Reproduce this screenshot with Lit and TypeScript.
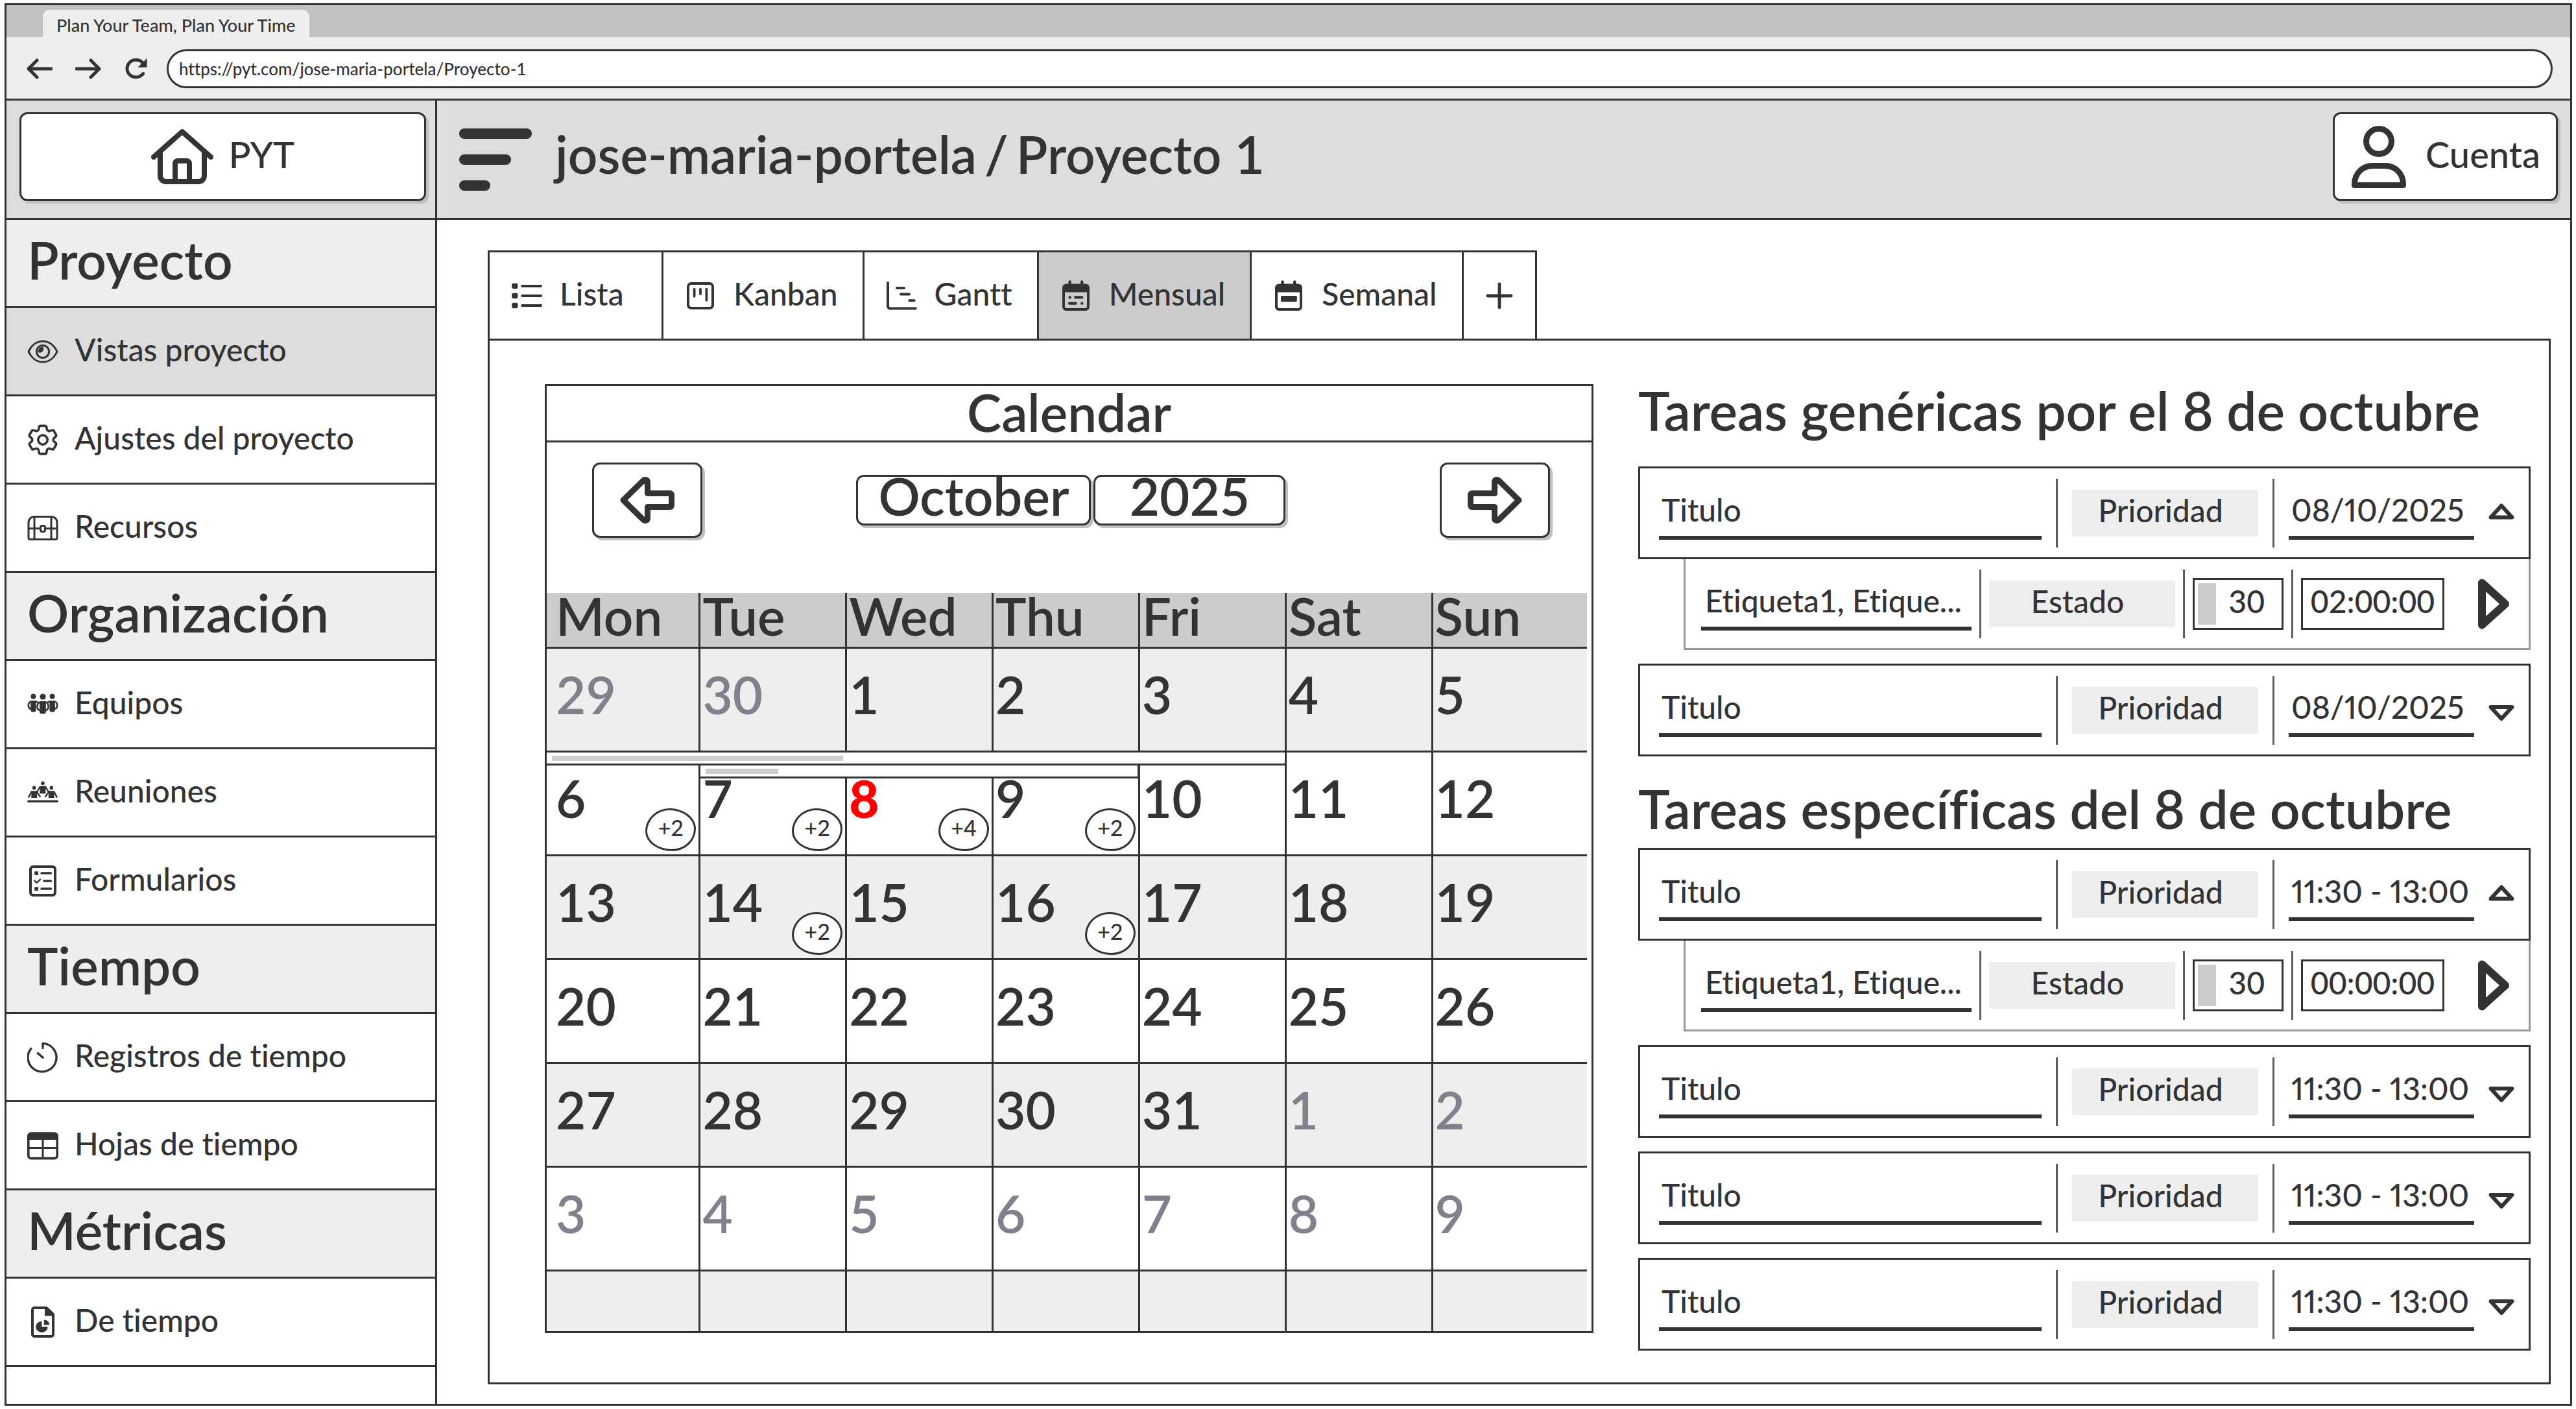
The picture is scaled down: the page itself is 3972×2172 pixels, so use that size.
import { LitElement, html, css, svg, nothing } from "lit";
import type { TemplateResult } from "lit";
import { customElement, property } from "lit/decorators.js";
import { classMap } from "lit/directives/class-map.js";
import { styleMap } from "lit/directives/style-map.js";

type Glyph = { box: string; body: TemplateResult };

const icons: Record<string, Glyph> = {
  back: { box: "0 0 40 32", body: svg`<path d="M38 16H3M16 3 3 16l13 13" stroke-width="5"/>` },
  forward: { box: "0 0 40 32", body: svg`<path d="M2 16h35M24 3l13 13-13 13" stroke-width="5"/>` },
  reload: {
    box: "0 0 38 36",
    body: svg`<path d="M30 26.5A15.500 15 0 1 1 29 7.500" stroke-width="5.500"/><path d="M36 1v14H22Z" fill="currentColor" stroke-width="1"/>`,
  },
  home: {
    box: "0 0 96 86",
    body: svg`<path d="M4 43 48 4l44 39M14 36v36a9 9 0 0 0 9 9h50a9 9 0 0 0 9-9V36M37 80V53a4 4 0 0 1 4-4h14a4 4 0 0 1 4 4v27" stroke-width="8"/>`,
  },
  person: {
    box: "0 0 84 96",
    body: svg`<circle cx="42" cy="24" r="19.500" stroke-width="9"/><path d="M4.500 91.500V90C4.500 73 17 61.500 33 61.500h18c16 0 28.500 11.500 28.500 28.500v1.500Z" stroke-width="9"/>`,
  },
  menu: {
    box: "0 0 112 96",
    body: svg`<g fill="currentColor" stroke="none"><rect width="112" height="16" rx="8"/><rect y="40" width="80" height="16" rx="8"/><rect y="80" width="48" height="16" rx="8"/></g>`,
  },
  eye: {
    box: "0 0 24 24",
    body: svg`<path d="M1 12c2.200-4.800 6.200-8 11-8s8.800 3.200 11 8c-2.200 4.800-6.200 8-11 8S3.200 16.800 1 12Z"/><circle cx="12" cy="12" r="4.800"/><path d="M8.800 12.200c2 .6 3.800-1 3.200-3.400-2 .1-3.200 1.500-3.200 3.400Z" fill="currentColor" stroke-width="1"/>`,
  },
  gear: {
    box: "2 2 20 20",
    body: svg`<path d="M9.594 3.940c.09-.542.56-.94 1.110-.94h2.593c.55 0 1.020.398 1.110.94l.213 1.281c.063.374.313.686.645.87.074.04.147.083.22.127.325.196.72.257 1.075.124l1.217-.456a1.125 1.125 0 0 1 1.370.49l1.296 2.247a1.125 1.125 0 0 1-.26 1.431l-1.003.827c-.293.241-.438.613-.43.992a7.723 7.723 0 0 1 0 .255c-.008.378.137.75.43.991l1.004.827c.424.35.534.955.26 1.430l-1.298 2.247a1.125 1.125 0 0 1-1.369.491l-1.217-.456c-.355-.133-.75-.072-1.076.124a6.470 6.470 0 0 1-.22.128c-.331.183-.581.495-.644.869l-.213 1.281c-.09.543-.56.94-1.110.94h-2.594c-.55 0-1.019-.398-1.110-.94l-.213-1.281c-.062-.374-.312-.686-.644-.87a6.520 6.520 0 0 1-.22-.127c-.325-.196-.72-.257-1.076-.124l-1.217.456a1.125 1.125 0 0 1-1.369-.49l-1.297-2.247a1.125 1.125 0 0 1 .26-1.431l1.004-.827c.292-.24.437-.613.43-.991a6.932 6.932 0 0 1 0-.255c.007-.38-.138-.751-.43-.992l-1.004-.827a1.125 1.125 0 0 1-.26-1.430l1.297-2.247a1.125 1.125 0 0 1 1.370-.491l1.216.456c.356.133.751.072 1.076-.124.072-.044.146-.086.22-.128.332-.183.582-.495.644-.869l.214-1.280Z"/><circle cx="12" cy="12" r="3"/>`,
  },
  chest: {
    box: "0 0 24 24",
    body: svg`<path d="M1 19.500V7.500a4.300 4.300 0 0 1 4.300-4.300h13.400A4.300 4.300 0 0 1 23 7.500v12a1.200 1.200 0 0 1-1.200 1.200H2.200A1.200 1.200 0 0 1 1 19.500ZM5.500 3.400v17.200M18.500 3.400v17.200M1 12.400h9M14 12.400h9"/><rect x="10.300" y="10.200" width="3.400" height="4.600" rx="1"/>`,
  },
  team: {
    box: "0 0 24 24",
    body: svg`<g fill="currentColor" stroke="none"><circle cx="4.700" cy="5.800" r="2"/><circle cx="19.300" cy="5.800" r="2"/><circle cx="12" cy="6" r="2.300"/><path d="M2.600 9h4.200v7.500a1.200 1.200 0 0 1-1.200 1.200H3.800a1.200 1.200 0 0 1-1.200-1.200ZM17.200 9h4.200v7.500a1.200 1.200 0 0 1-1.200 1.200h-1.800a1.200 1.200 0 0 1-1.200-1.200ZM9.600 9.500h4.800v8.300a1.300 1.300 0 0 1-1.300 1.300h-2.200a1.300 1.300 0 0 1-1.300-1.300Z"/></g><path d="M2.800 9.700C.4 10.500.2 14.400 2.600 15.400M6.500 9.600c.8.100 1.300.4 1.600.8M21.200 9.700c2.400.8 2.600 4.700.2 5.700M17.500 9.600c-.8.100-1.300.4-1.600.8M9.800 10.200c-2.800 1.200-2.800 5.400 0 6.400M14.200 10.200c2.800 1.200 2.800 5.400 0 6.400" stroke-width="1.300"/>`,
  },
  meeting: {
    box: "0 0 24 24",
    body: svg`<g fill="currentColor" stroke="none"><circle cx="12" cy="4.600" r="1.400"/><circle cx="5.300" cy="8.200" r="1.400"/><circle cx="18.700" cy="8.200" r="1.400"/><path d="M9.800 6.900h4.400v5.700H9.800ZM3.200 10.600h4.400V16H3.200ZM16.400 10.600h4.400V16h-4.400Z"/></g><path d="M9.800 7.500 7.800 11M14.200 7.500l2 3.500M3.300 11.300 1.200 15.300M7.500 11.300l2.400 3.700M16.500 11.300 14.100 15M20.700 11.300l2.100 4" stroke-width="1.200"/><path d="M.9 18.600h22.200" stroke-width="1.700"/>`,
  },
  form: {
    box: "0 0 24 24",
    body: svg`<rect x="2.500" y="1" width="19" height="22" rx="2" stroke-width="2"/><path d="M11 6h7.200M13 12h5.200M11 18h7.200" stroke-width="1.800"/><path d="M5.700 11.800l1.600 1.600 2.800-2.600" stroke-width="1.200"/><g fill="currentColor" stroke="none"><rect x="5.600" y="4.600" width="2.900" height="2.900" rx="0.600"/><rect x="5.600" y="16.600" width="2.900" height="2.900" rx="0.600"/></g>`,
  },
  timer: {
    box: "0 0 24 24",
    body: svg`<path d="M12 4.800V1.200A11 10.900 0 1 1 2.900 5.300M8.200 8.800l3.900 3.300" stroke-width="1.700"/>`,
  },
  sheet: {
    box: "0 0 24 24",
    body: svg`<rect x="0.900" y="2.500" width="22.200" height="19.300" rx="2" stroke-width="1.800"/><path d="M1 3h22v4.500H1Z" fill="currentColor" stroke="none"/><path d="M12 7v14.500M1 13.700h22"/>`,
  },
  report: {
    box: "0 0 24 24",
    body: svg`<path d="M14.800 1H5.500A1.500 1.500 0 0 0 4 2.500v19A1.500 1.500 0 0 0 5.500 23h13a1.500 1.500 0 0 0 1.500-1.500V6Z" stroke-width="2"/><path d="M14 1v5.800h6Z" fill="currentColor" stroke-width="1"/><path d="M11.200 11.400v4.200h4.600A4.600 4.300 0 1 1 11.200 11.400Z" fill="currentColor" stroke="none"/><path d="M12.900 10.300v3.800h4.300A4.300 3.800 0 0 0 12.900 10.300Z" fill="currentColor" stroke="none"/>`,
  },
  list: {
    box: "0 0 24 24",
    body: svg`<g fill="currentColor" stroke="none"><rect x="0.600" y="2.400" width="4.600" height="4.200" rx="1.200"/><rect x="0.600" y="9.900" width="4.600" height="4.200" rx="1.200"/><rect x="0.600" y="17.400" width="4.600" height="4.200" rx="1.200"/></g><path d="M8.600 4.500H23M8.600 12H23M8.600 19.500H23" stroke-width="2"/>`,
  },
  kanban: {
    box: "0 0 24 24",
    body: svg`<rect x="2.500" y="2.500" width="19" height="19" rx="2.500" stroke-width="2"/><path d="M7.300 6.800v5.600M12 6.800v3.800M16.700 6.800v8.600" stroke-width="1.900"/>`,
  },
  gantt: {
    box: "0 0 24 24",
    body: svg`<path d="M1.500 2v18a1.800 1.800 0 0 0 1.800 1.800h19.600M8.500 6H14M11.500 10.800H18M18.200 15.600h3.600" stroke-width="2"/>`,
  },
  month: {
    box: "0 0 24 24",
    body: svg`<rect x="2.500" y="3.800" width="19" height="18.700" rx="2" stroke-width="2"/><path d="M2.500 3.500h19v5.700h-19Z" fill="currentColor" stroke="none"/><path d="M7.300 1.200V4M16.600 1.200V4M11.600 13.200h5M7 17.800h4.800M7.300 13.200h.1M16.600 17.800h.1" stroke-width="2.200"/>`,
  },
  week: {
    box: "0 0 24 24",
    body: svg`<rect x="2.500" y="3.800" width="19" height="18.700" rx="2" stroke-width="2"/><path d="M2.500 3.500h19v5.700h-19Z" fill="currentColor" stroke="none"/><path d="M7.300 1.200V4M16.600 1.200V4" stroke-width="2.200"/><rect x="6" y="12" width="12.400" height="4.600" rx="0.800" fill="currentColor" stroke="none"/>`,
  },
  plus: { box: "0 0 24 24", body: svg`<path d="M12 3v18M3 12h18" stroke-width="2.400"/>` },
  arrowLeft: {
    box: "0 0 84 72",
    body: svg`<path d="M5 36 36.500 5.200Q42.500 3 42.500 9v16.500H77q2.500 0 2.500 3v15q0 3-2.500 3H42.500V63q0 6-6 3.800Z" stroke-width="9"/>`,
  },
  arrowRight: {
    box: "0 0 84 72",
    body: svg`<path d="M79 36 47.500 5.200Q41.500 3 41.500 9v16.500H7q-2.500 0-2.500 3v15q0 3 2.500 3h34.500V63q0 6 6 3.800Z" stroke-width="9"/>`,
  },
  up: { box: "0 0 40 40", body: svg`<path d="M3.500 26.500 20 8.500l16.500 18Z" stroke-width="6"/>` },
  down: { box: "0 0 40 40", body: svg`<path d="M3.500 15l16.500 18L36.500 15Z" stroke-width="6"/>` },
  play: { box: "0 0 48 82", body: svg`<path d="M6 8.500v65L42 41Z" stroke-width="12"/>` },
};

const shared = css`
  *,
  *::before,
  *::after {
    box-sizing: border-box;
  }
  h1,
  h2,
  h3,
  p,
  ul {
    margin: 0;
    padding: 0;
    font-weight: inherit;
  }
  ul {
    list-style: none;
  }
  a {
    color: inherit;
    text-decoration: none;
  }
  button,
  input {
    margin: 0;
    padding: 0;
    border: 0;
    border-radius: 0;
    background: none;
    color: inherit;
    font: inherit;
    min-width: 0;
  }
`;

@customElement("ui-icon")
export class UiIcon extends LitElement {
  @property() name = "";

  static styles = css`
    :host {
      display: inline-flex;
      flex: none;
    }
    .glyph {
      width: 100%;
      height: 100%;
      fill: none;
      stroke: currentColor;
      stroke-width: 1.500;
      stroke-linecap: round;
      stroke-linejoin: round;
    }
  `;

  render() {
    const glyph = icons[this.name];
    return glyph
      ? html`<svg class="glyph" viewBox=${glyph.box} aria-hidden="true">${glyph.body}</svg>`
      : nothing;
  }
}

type NavEntry = { label: string; icon?: string; active?: boolean };

const nav: NavEntry[] = [
  { label: "Proyecto" },
  { label: "Vistas proyecto", icon: "eye", active: true },
  { label: "Ajustes del proyecto", icon: "gear" },
  { label: "Recursos", icon: "chest" },
  { label: "Organización" },
  { label: "Equipos", icon: "team" },
  { label: "Reuniones", icon: "meeting" },
  { label: "Formularios", icon: "form" },
  { label: "Tiempo" },
  { label: "Registros de tiempo", icon: "timer" },
  { label: "Hojas de tiempo", icon: "sheet" },
  { label: "Métricas" },
  { label: "De tiempo", icon: "report" },
];

@customElement("side-nav")
export class SideNav extends LitElement {
  static styles = [
    shared,
    css`
      :host {
        display: block;
      }
      .row {
        display: flex;
        align-items: center;
        height: 136px;
        border-bottom: 3px solid var(--ink);
      }
      .section {
        padding: 0 32px 12px;
        background: var(--soft);
        font-size: 80px;
        font-weight: 600;
        line-height: 96px;
      }
      .link {
        gap: 25px;
        padding: 0 32px;
      }
      .active {
        background: var(--mid);
      }
      .icon {
        width: 48px;
        height: 48px;
      }
      .label {
        padding-bottom: 6px;
      }
    `,
  ];

  render() {
    return html`<nav aria-label="Proyecto">
      ${nav.map((entry) =>
        entry.icon
          ? html`<a class=${classMap({ row: true, link: true, active: !!entry.active })} href="#">
              <ui-icon class="icon" name=${entry.icon}></ui-icon>
              <span class="label">${entry.label}</span>
            </a>`
          : html`<h2 class="row section">${entry.label}</h2>`
      )}
    </nav>`;
  }
}

type Bar = { span: number; done: number; lane: number };
type Day = { n: string; muted?: boolean; today?: boolean; more?: string; bar?: Bar };

const day = (n: number, extra: Partial<Day> = {}): Day => ({ n: String(n), ...extra });
const muted = { muted: true };

const weeks: Day[][] = [
  [day(29, muted), day(30, muted), day(1), day(2), day(3), day(4), day(5)],
  [
    day(6, { more: "+2", bar: { span: 488, done: 40, lane: 0 } }),
    day(7, { more: "+2", bar: { span: 305, done: 17, lane: 1 } }),
    day(8, { more: "+4", today: true }),
    day(9, { more: "+2" }),
    day(10),
    day(11),
    day(12),
  ],
  [day(13), day(14, { more: "+2" }), day(15), day(16, { more: "+2" }), day(17), day(18), day(19)],
  [20, 21, 22, 23, 24, 25, 26].map((n) => day(n)),
  [day(27), day(28), day(29), day(30), day(31), day(1, muted), day(2, muted)],
  [3, 4, 5, 6, 7, 8, 9].map((n) => day(n, muted)),
  Array.from({ length: 7 }, () => ({ n: "" })),
];

@customElement("month-calendar")
export class MonthCalendar extends LitElement {
  static styles = [
    shared,
    css`
      :host {
        display: block;
        border: 3px solid var(--ink);
        font-size: 80px;
        font-weight: 600;
        line-height: 96px;
      }
      .title {
        height: 87px;
        border-bottom: 3px solid var(--ink);
        font-size: 80px;
        line-height: 80px;
        text-align: center;
      }
      .picker {
        display: flex;
        justify-content: space-between;
        align-items: center;
        height: 114px;
        margin: 32px 64px 86px 70px;
      }
      .period {
        display: flex;
        gap: 4px;
      }
      .boxed {
        display: flex;
        justify-content: center;
        align-items: center;
        border: 3px solid var(--ink);
        border-radius: 12px;
        background: #fff;
        box-shadow: 4px 4px 0 var(--shadow);
      }
      .step {
        width: 170px;
        height: 116px;
      }
      .arrow {
        width: 84px;
        height: 72px;
      }
      .month,
      .year {
        height: 78px;
        padding-bottom: 14px;
        line-height: 64px;
      }
      .month {
        width: 362px;
      }
      .year {
        width: 296px;
      }
      .grid {
        width: calc(100% - 7px);
        border-collapse: separate;
        border-spacing: 0;
        table-layout: fixed;
      }
      .edge {
        width: 14.800%;
      }
      .head,
      .cell {
        border-right: 3px solid var(--ink);
        border-bottom: 3px solid var(--ink);
        padding: 0 0 0 3px;
        font-weight: inherit;
        text-align: left;
        vertical-align: top;
      }
      .head {
        height: 86px;
        background: var(--strong);
        line-height: 70px;
      }
      .cell {
        position: relative;
        height: 160px;
        padding-top: 22px;
      }
      .head:first-child,
      .cell:first-child {
        padding-left: 14px;
      }
      .head:last-child,
      .cell:last-child {
        border-right: 0;
      }
      .week:nth-child(odd) {
        background: var(--soft);
      }
      .week:last-child .cell {
        height: 92px;
        padding: 0;
        border-bottom: 0;
      }
      .muted {
        color: #81818d;
      }
      .today {
        color: #f00;
        font-weight: 900;
      }
      .bar {
        position: absolute;
        z-index: 1;
        left: -3px;
        height: 23px;
        padding: 6px 8px;
        border: 3px solid var(--ink);
        background: #fff;
      }
      .lane-0 {
        top: -3px;
      }
      .lane-1 {
        top: 17px;
      }
      .done {
        display: block;
        height: 8px;
        margin-top: -1px;
        background: var(--strong);
      }
      .more {
        position: absolute;
        right: 4px;
        bottom: 5px;
        width: 78px;
        height: 66px;
        padding-bottom: 6px;
        border: 3px solid var(--ink);
        border-radius: 48% 52% 47% 53% / 54% 48% 52% 46%;
        background: #fff;
        color: var(--ink);
        font-size: 34px;
        font-weight: 500;
        line-height: 40px;
        text-align: center;
      }
    `,
  ];

  private renderBar(bar?: Bar) {
    if (!bar) return nothing;
    return html`<span
      class=${`bar lane-${bar.lane}`}
      style=${styleMap({ width: `${bar.span}%` })}
      ><span class="done" style=${styleMap({ width: `${bar.done}%` })}></span
    ></span>`;
  }

  render() {
    const names = ["Mon", "Tue", "Wed", "Thu", "Fri", "Sat", "Sun"];
    return html`
      <h2 class="title">Calendar</h2>
      <div class="picker">
        <button class="boxed step" aria-label="Mes anterior">
          <ui-icon class="arrow" name="arrowLeft"></ui-icon>
        </button>
        <div class="period">
          <button class="boxed month">October</button>
          <button class="boxed year">2025</button>
        </div>
        <button class="boxed step" aria-label="Mes siguiente">
          <ui-icon class="arrow" name="arrowRight"></ui-icon>
        </button>
      </div>
      <table class="grid">
        <colgroup>
          <col class="edge" />
          <col span="5" />
          <col class="edge" />
        </colgroup>
        <thead>
          <tr>
            ${names.map((name) => html`<th class="head" scope="col">${name}</th>`)}
          </tr>
        </thead>
        <tbody>
          ${weeks.map(
            (week) => html`<tr class="week">
              ${week.map(
                (d) => html`<td
                  class=${classMap({ cell: true, muted: !!d.muted, today: !!d.today })}
                >
                  ${d.n}${this.renderBar(d.bar)}${d.more
                    ? html`<button class="more">${d.more}</button>`
                    : nothing}
                </td>`
              )}
            </tr>`
          )}
        </tbody>
      </table>
    `;
  }
}

@customElement("task-card")
export class TaskCard extends LitElement {
  @property() when = "";
  @property() spent = "";

  static styles = [
    shared,
    css`
      :host {
        display: block;
      }
      .main,
      .detail {
        display: flex;
        align-items: center;
      }
      .main {
        height: 143px;
        gap: 22px;
        padding: 0 22px 0 29px;
        border: 3px solid var(--ink);
      }
      .detail {
        height: 140px;
        gap: 12px;
        margin-left: 70px;
        padding: 0 30px 0 24px;
        border: 3px solid #999;
        border-top: 0;
      }
      .field {
        height: 82px;
        padding: 0 0 4px 4px;
        border-bottom: 6px solid var(--ink);
      }
      .title,
      .tags {
        flex: 1;
      }
      .tags {
        padding-left: 6px;
      }
      .date {
        width: 286px;
        font-variant-numeric: proportional-nums;
      }
      .rule {
        flex: none;
        width: 3px;
        height: 106px;
        background: #5c5c5c;
      }
      .chip {
        flex: none;
        width: 287px;
        height: 72px;
        padding: 0 14px 8px 0;
        background: var(--soft);
      }
      .toggle,
      .play {
        display: flex;
        flex: none;
      }
      .toggle-icon {
        width: 40px;
        height: 40px;
      }
      .play {
        margin-left: 40px;
      }
      .play-icon {
        width: 48px;
        height: 82px;
      }
      .box {
        display: flex;
        flex: none;
        align-items: center;
        height: 80px;
        border: 3px solid var(--ink);
      }
      .progress {
        width: 140px;
        padding-left: 5px;
      }
      .level {
        flex: none;
        width: 28px;
        height: 64px;
        background: var(--strong);
      }
      .amount {
        flex: 1;
        height: 74px;
        padding: 0 26px 8px 0;
        text-align: right;
      }
      .clock {
        width: 221px;
        padding-bottom: 8px;
        text-align: center;
      }
    `,
  ];

  render() {
    const open = this.spent !== "";
    return html`
      <div class="main">
        <input class="field title" aria-label="Titulo" .value=${"Titulo"} />
        <span class="rule"></span>
        <button class="chip">Prioridad</button>
        <span class="rule"></span>
        <input class="field date" aria-label="Fecha" .value=${this.when} />
        <button class="toggle" aria-label="Detalles" aria-expanded=${open ? "true" : "false"}>
          <ui-icon class="toggle-icon" name=${open ? "up" : "down"}></ui-icon>
        </button>
      </div>
      ${open
        ? html`<div class="detail">
            <input class="field tags" aria-label="Etiquetas" .value=${"Etiqueta1, Etique..."} />
            <span class="rule"></span>
            <button class="chip">Estado</button>
            <span class="rule"></span>
            <div class="box progress">
              <span class="level"></span>
              <input class="amount" aria-label="Progreso" .value=${"30"} />
            </div>
            <span class="rule"></span>
            <input class="box clock" aria-label="Tiempo" .value=${this.spent} />
            <button class="play" aria-label="Iniciar">
              <ui-icon class="play-icon" name="play"></ui-icon>
            </button>
          </div>`
        : nothing}
    `;
  }
}

const tabs: NavEntry[] = [
  { label: "Lista", icon: "list" },
  { label: "Kanban", icon: "kanban" },
  { label: "Gantt", icon: "gantt" },
  { label: "Mensual", icon: "month", active: true },
  { label: "Semanal", icon: "week" },
];

@customElement("app-root")
export class AppRoot extends LitElement {
  static styles = [
    shared,
    css`
      :host {
        --ink: #333;
        --soft: #eee;
        --mid: #ddd;
        --strong: #ccc;
        --shadow: #bfbfbf;
        display: flex;
        flex-direction: column;
        box-sizing: border-box;
        min-height: 100vh;
        padding: 5px 6px 5px 7px;
        background: #fff;
        color: var(--ink);
        font-family: Lato, "Open Sans", sans-serif;
        font-size: 48px;
        font-weight: 500;
        font-variant-ligatures: none;
        line-height: 58px;
      }
      .window {
        display: flex;
        flex: 1;
        flex-direction: column;
        border: 3px solid var(--ink);
      }
      .strip {
        display: flex;
        align-items: flex-end;
        height: 49px;
        padding-left: 56px;
        background: #c1c1c1;
      }
      .page-tab {
        height: 42px;
        padding: 0 21px;
        border-radius: 10px 10px 0 0;
        background: var(--soft);
        font-size: 27px;
        line-height: 48px;
      }
      .toolbar {
        display: flex;
        align-items: center;
        height: 95px;
        padding: 2px 27px 0 31px;
        background: var(--soft);
      }
      .tool {
        display: flex;
        margin-right: 35px;
      }
      .tool-icon {
        width: 40px;
        height: 32px;
      }
      .tool:nth-child(3) {
        margin-right: 26px;
      }
      .address {
        flex: 1;
        height: 60px;
        padding: 0 16px;
        border: 3px solid var(--ink);
        border-radius: 30px;
        background: #fff;
        font-size: 26px;
      }
      .header {
        display: grid;
        grid-template-columns: 664px 1fr;
        height: 187px;
        border-top: 3px solid var(--ink);
        border-bottom: 3px solid var(--ink);
        background: var(--mid);
      }
      .brand {
        display: flex;
        padding: 18px 14px 26px 20px;
        border-right: 3px solid var(--ink);
      }
      .boxed {
        display: flex;
        justify-content: center;
        align-items: center;
        gap: 24px;
        border: 3px solid var(--ink);
        border-radius: 12px;
        background: #fff;
        box-shadow: 4px 4px 0 var(--shadow);
        font-size: 56px;
      }
      .boxed-label {
        padding-bottom: 8px;
      }
      .home {
        flex: 1;
      }
      .home-icon {
        width: 96px;
        height: 86px;
      }
      .bar {
        display: flex;
        align-items: stretch;
        padding: 18px 19px 26px 34px;
      }
      .menu {
        display: flex;
        align-self: center;
        margin-top: 8px;
      }
      .menu-icon {
        width: 112px;
        height: 96px;
      }
      .path {
        display: flex;
        flex: 1;
        align-self: center;
        gap: 12px;
        padding: 0 0 10px 36px;
        font-size: 80px;
        font-weight: 600;
        line-height: 96px;
      }
      .account {
        gap: 30px;
        padding: 0 24px 0 26px;
      }
      .account-icon {
        width: 84px;
        height: 96px;
      }
      .body {
        display: grid;
        flex: 1;
        grid-template-columns: 664px minmax(0, 1fr);
      }
      .side {
        border-right: 3px solid var(--ink);
      }
      .content {
        display: flex;
        flex-direction: column;
        padding: 47px 30px 30px 78px;
      }
      .tabs {
        display: flex;
      }
      .tab {
        display: flex;
        align-items: center;
        gap: 27px;
        height: 136px;
        min-width: 268px;
        padding: 0 38px 0 33px;
        border: 3px solid var(--ink);
        border-right: 0;
        border-bottom: 0;
      }
      .add {
        min-width: 0;
        padding: 0 31px;
        border-right: 3px solid var(--ink);
      }
      .tab-label {
        padding-bottom: 6px;
      }
      .current {
        background: var(--strong);
      }
      .icon {
        width: 48px;
        height: 48px;
      }
      .panel {
        display: grid;
        flex: 1;
        grid-template-columns: minmax(0, 47fr) minmax(0, 40fr);
        align-items: start;
        gap: 69px;
        padding: 67px 28px 44px 85px;
        border: 3px solid var(--ink);
      }
      .tasks {
        display: flex;
        flex-direction: column;
        gap: 40px;
      }
      .group {
        display: flex;
        flex-direction: column;
        gap: 21px;
      }
      .group-title {
        font-size: 82px;
        font-weight: 600;
        line-height: 80px;
        white-space: nowrap;
      }
      .generic .group-title {
        padding-bottom: 26px;
      }
    `,
  ];

  render() {
    return html`
      <div class="window">
        <div class="strip"><div class="page-tab">Plan Your Team, Plan Your Time</div></div>
        <div class="toolbar">
          <button class="tool" aria-label="Atrás">
            <ui-icon class="tool-icon" name="back"></ui-icon>
          </button>
          <button class="tool" aria-label="Adelante">
            <ui-icon class="tool-icon" name="forward"></ui-icon>
          </button>
          <button class="tool" aria-label="Recargar">
            <ui-icon class="tool-icon" name="reload"></ui-icon>
          </button>
          <input
            class="address"
            aria-label="Dirección"
            .value=${"https://pyt.com/jose-maria-portela/Proyecto-1"}
          />
        </div>
        <header class="header">
          <div class="brand">
            <button class="boxed home">
              <ui-icon class="home-icon" name="home"></ui-icon>
              <span class="boxed-label">PYT</span>
            </button>
          </div>
          <div class="bar">
            <button class="menu" aria-label="Menú">
              <ui-icon class="menu-icon" name="menu"></ui-icon>
            </button>
            <h1 class="path">
              <a href="#">jose-maria-portela</a><span>/</span><a href="#">Proyecto 1</a>
            </h1>
            <button class="boxed account">
              <ui-icon class="account-icon" name="person"></ui-icon>
              <span class="boxed-label">Cuenta</span>
            </button>
          </div>
        </header>
        <div class="body">
          <side-nav class="side"></side-nav>
          <main class="content">
            <div class="tabs">
              ${tabs.map(
                (tab) => html`<button class=${classMap({ tab: true, current: !!tab.active })}>
                  <ui-icon class="icon" name=${tab.icon ?? ""}></ui-icon>
                  <span class="tab-label">${tab.label}</span>
                </button>`
              )}
              <button class="tab add" aria-label="Añadir vista">
                <ui-icon class="icon" name="plus"></ui-icon>
              </button>
            </div>
            <div class="panel">
              <month-calendar></month-calendar>
              <div class="tasks">
                <section class="group generic">
                  <h2 class="group-title">Tareas genéricas por el 8 de octubre</h2>
                  <task-card when="08/10/2025" spent="02:00:00"></task-card>
                  <task-card when="08/10/2025"></task-card>
                </section>
                <section class="group">
                  <h2 class="group-title">Tareas específicas del 8 de octubre</h2>
                  <task-card when="11:30 - 13:00" spent="00:00:00"></task-card>
                  <task-card when="11:30 - 13:00"></task-card>
                  <task-card when="11:30 - 13:00"></task-card>
                  <task-card when="11:30 - 13:00"></task-card>
                </section>
              </div>
            </div>
          </main>
        </div>
      </div>
    `;
  }
}
